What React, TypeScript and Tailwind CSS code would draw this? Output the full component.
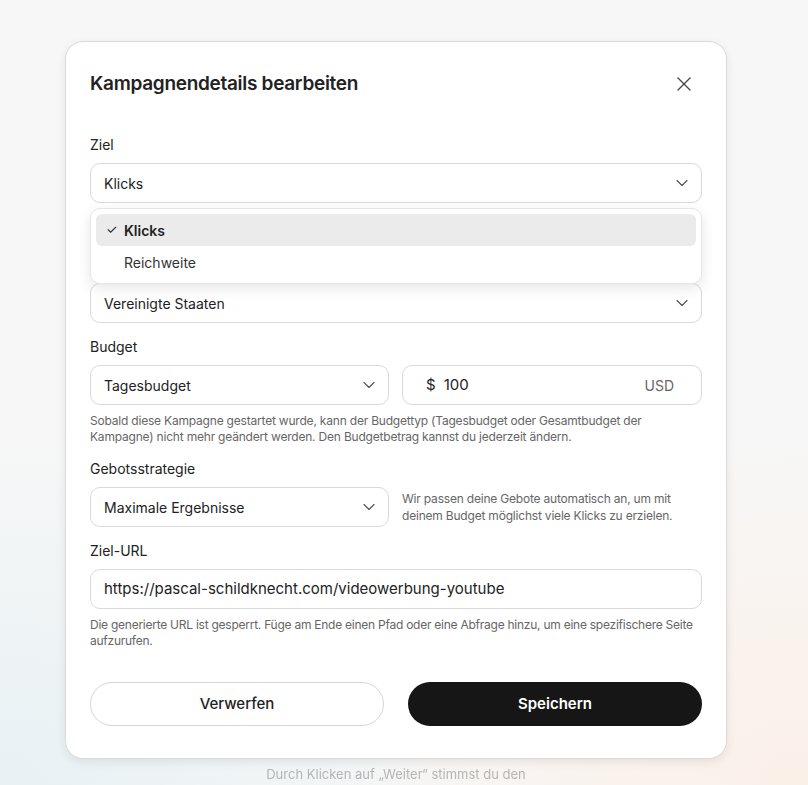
import { ChevronDown, X } from 'lucide-react';

function SelectBox({ value, className = '' }: { value: string; className?: string }) {
  return (
    <div className={`flex h-10 items-center justify-between rounded-[10px] border border-[#d9d9d9] bg-white pl-[13px] pr-[9px] ${className}`}>
      <span className="text-[14px] text-[#222]">{value}</span>
      <ChevronDown className="h-5 w-5 text-[#555]" strokeWidth={1.4} />
    </div>
  );
}

function Label({ children }: { children: string }) {
  return <div className="mb-2 text-[14px] leading-5 text-[#222]">{children}</div>;
}

export default function App() {
  return (
    <div
      className="relative min-h-screen overflow-hidden bg-[#f7f7f7] bg-[radial-gradient(ellipse_60%_45%_at_0%_100%,#e8f1f4,transparent),radial-gradient(ellipse_60%_45%_at_100%_100%,#fbf0e8,transparent)] pt-[41px]"
      style={{ fontFamily: 'Inter, "Noto Sans", sans-serif' }}
    >
      <div className="ml-[65px] w-[662px] rounded-[18px] border border-[#dadada] bg-white px-6 pb-8 pt-7 shadow-[0_3px_10px_rgba(0,0,0,0.08)]">
        <div className="flex items-center justify-between">
          <h1 className="text-[19px] font-semibold leading-7 tracking-[-0.3px] text-[#222]">Kampagnendetails bearbeiten</h1>
          <X className="mr-[6px] h-6 w-6 text-[#444]" strokeWidth={1.3} />
        </div>

        <div className="mt-[37px]">
          <Label>Ziel</Label>
          <div className="relative">
            <SelectBox value="Klicks" />
            <div className="absolute left-0 right-0 top-[45px] z-10 rounded-[10px] border border-[#e6e6e6] bg-white p-[5px] shadow-[0_4px_14px_rgba(0,0,0,0.10)]">
              <div className="flex h-8 items-center rounded-[6px] bg-[#ebebeb] pl-[10px] text-[14px] font-semibold text-[#222]">
                <span className="w-[18px] text-[13px] font-normal">✓</span>
                Klicks
              </div>
              <div className="flex h-8 items-center pl-[28px] text-[14px] text-[#333]">Reichweite</div>
            </div>
          </div>
        </div>

        <div className="h-[80px]" />
        <SelectBox value="Vereinigte Staaten" />

        <div className="mt-[14px]">
          <Label>Budget</Label>
          <div className="flex gap-[13px]">
            <SelectBox value="Tagesbudget" className="w-[299px]" />
            <div className="flex h-10 flex-1 items-center justify-between rounded-[10px] border border-[#d9d9d9] bg-white pl-[23px] pr-[27px]">
              <span className="text-[15px] text-[#222]">
                $<span className="ml-[8px]">100</span>
              </span>
              <span className="text-[14px] text-[#666]">USD</span>
            </div>
          </div>
          <p className="mt-2 text-[12px] leading-4 tracking-[-0.2px] text-[#666]">
            Sobald diese Kampagne gestartet wurde, kann der Budgettyp (Tagesbudget oder Gesamtbudget der
            <br />
            Kampagne) nicht mehr geändert werden. Den Budgetbetrag kannst du jederzeit ändern.
          </p>
        </div>

        <div className="mt-[14px]">
          <Label>Gebotsstrategie</Label>
          <div className="flex items-center gap-[13px]">
            <SelectBox value="Maximale Ergebnisse" className="w-[299px]" />
            <p className="text-[12px] leading-[17px] tracking-[-0.2px] text-[#666]">
              Wir passen deine Gebote automatisch an, um mit
              <br />
              deinem Budget möglichst viele Klicks zu erzielen.
            </p>
          </div>
        </div>

        <div className="mt-[14px]">
          <Label>Ziel-URL</Label>
          <div className="flex h-10 items-center rounded-[10px] border border-[#d9d9d9] bg-white pl-[13px]">
            <span className="text-[15px] text-[#222]">https://pascal-schildknecht.com/videowerbung-youtube</span>
          </div>
          <p className="mt-2 text-[12px] leading-4 tracking-[-0.25px] text-[#666]">
            Die generierte URL ist gesperrt. Füge am Ende einen Pfad oder eine Abfrage hinzu, um eine spezifischere Seite
            <br />
            aufzurufen.
          </p>
        </div>

        <div className="mt-[33px] flex gap-6">
          <button className="h-11 w-[294px] rounded-full border border-[#d6d6d6] bg-white text-[15px] font-medium text-[#222]">
            Verwerfen
          </button>
          <button className="h-11 flex-1 rounded-full bg-[#161616] text-[15px] font-semibold text-white">Speichern</button>
        </div>
      </div>

      <p className="ml-[65px] mt-[5px] w-[662px] text-center text-[13px] leading-5 text-[#b5b5b5] blur-[0.4px]">
        Durch Klicken auf „Weiter“ stimmst du den
      </p>
    </div>
  );
}
